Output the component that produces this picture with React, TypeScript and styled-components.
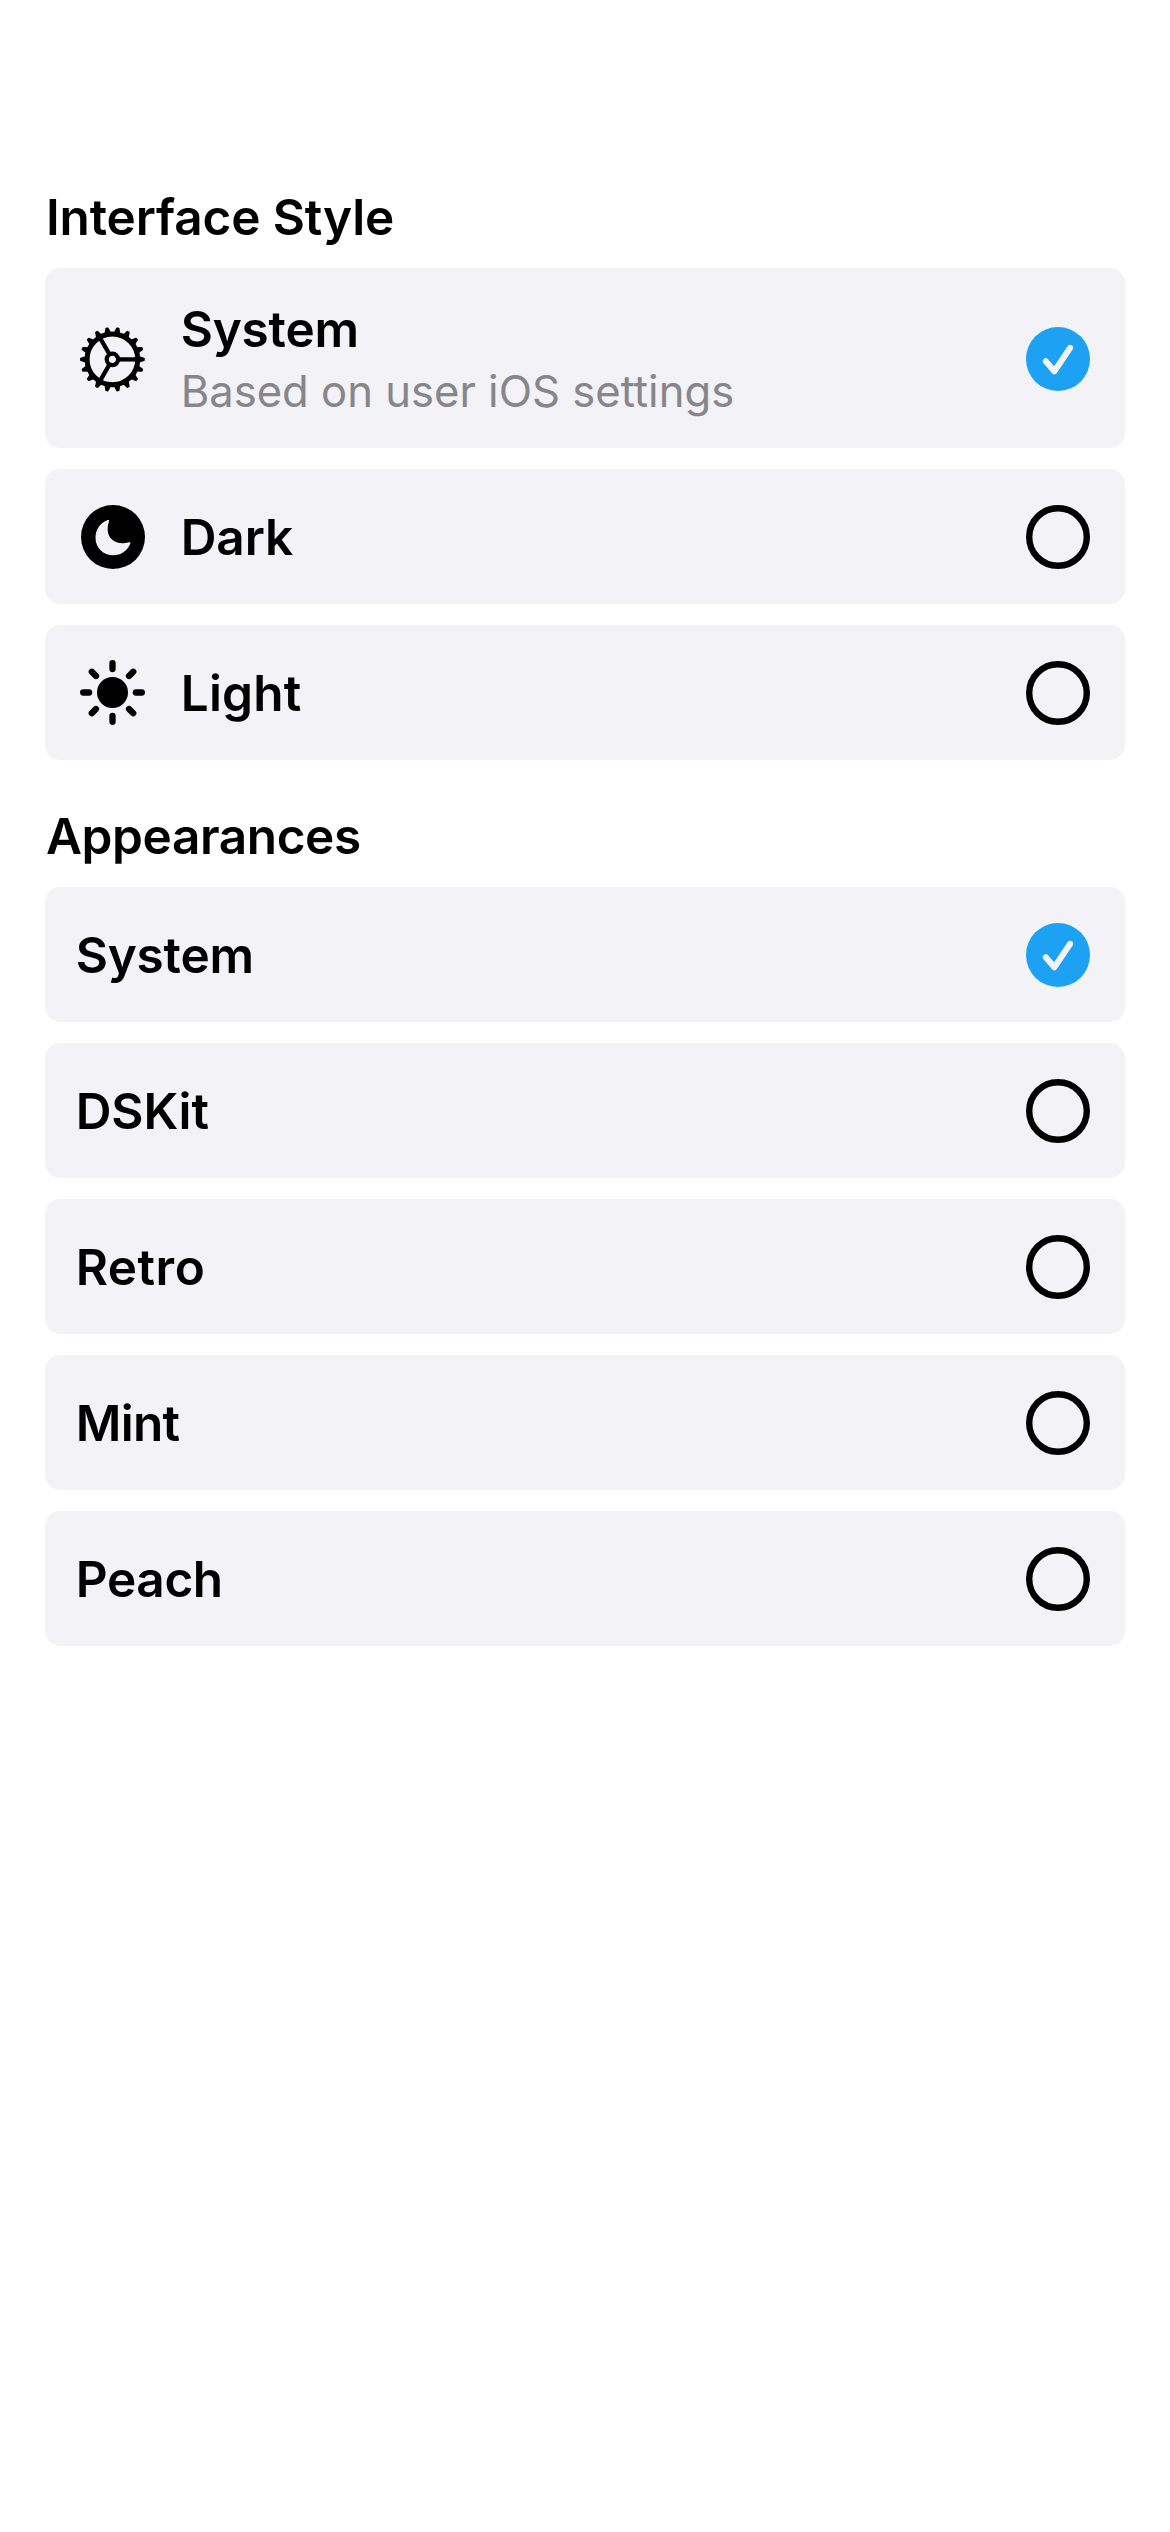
import React, { useState } from "react";
import styled, { createGlobalStyle } from "styled-components";

const GlobalStyle = createGlobalStyle`
  * {
    box-sizing: border-box;
  }

  body {
    margin: 0;
    background: #ffffff;
    color: #000000;
    font-family: Inter, "Liberation Sans", sans-serif;
  }
`;

const Screen = styled.main`
  display: flex;
  flex-direction: column;
  gap: 46px;
  min-height: 2532px;
  padding: 187px 45px 0;
  background: #ffffff;
`;

const Section = styled.section`
  display: flex;
  flex-direction: column;
  gap: 21px;
`;

const Heading = styled.h2<{ $tracking: number }>`
  margin: 0;
  padding-left: 1px;
  font-size: 49.5px;
  font-weight: 600;
  line-height: 60px;
  letter-spacing: ${(p) => p.$tracking}px;
`;

const Row = styled.div`
  display: flex;
  align-items: center;
  gap: 30px;
  padding: 30px;
  border-radius: 15px;
  background: #f2f2f7;
  cursor: pointer;
`;

const IconSlot = styled.div`
  display: flex;
  flex: none;
  align-items: center;
  justify-content: center;
  width: 75px;
  height: 75px;
`;

const Glyph = styled.svg`
  display: block;
  width: 75px;
  height: 75px;
`;

const Labels = styled.div`
  display: flex;
  flex: 1;
  flex-direction: column;
  gap: 5px;
  padding-left: 0.7px;
`;

const Title = styled.span<{ $tracking: number }>`
  font-size: 49.5px;
  font-weight: 600;
  line-height: 62px;
  letter-spacing: ${(p) => p.$tracking}px;
`;

const Subtitle = styled.span`
  color: #86868b;
  font-size: 43.6px;
  font-weight: 400;
  line-height: 53px;
`;

const TEETH = Array.from({ length: 18 }, (_, i) => i * 20);
const SPOKES = [0, 120, 240];
const RAYS = Array.from({ length: 8 }, (_, i) => i * 45);

function GearIcon() {
  return (
    <Glyph viewBox="-37.5 -37.5 75 75">
      <g transform="translate(-0.1 0.9)">
        <circle r="25.3" fill="none" stroke="#000" strokeWidth="5" />
        <circle r="5.7" fill="none" stroke="#000" strokeWidth="4.2" />
        {SPOKES.map((a) => (
          <line key={a} x1="6.5" y1="0" x2="25" y2="0" stroke="#000" strokeWidth="4.3" transform={`rotate(${a})`} />
        ))}
        {TEETH.map((a) => (
          <path
            key={a}
            d="M26 -2.6 L31.5 -0.8 V0.8 L26 2.6 Z"
            stroke="#000"
            strokeWidth="1.7"
            strokeLinejoin="round"
            transform={`rotate(${a})`}
          />
        ))}
      </g>
    </Glyph>
  );
}

function MoonIcon() {
  return (
    <Glyph viewBox="-37.5 -37.5 75 75">
      <g transform="translate(0.5 0.5)">
        <circle r="32" />
        <path
          d="M-5.3 -16.9 C-12.7 -14.3 -17.5 -7.4 -17.5 0.8 C-17.5 10.9 -9.7 18.3 0.3 18.3 C8 18.3 14.8 13.6 17.3 6.5 C17.8 5.4 17 4.9 16 5.3 C9.5 7.3 2.8 6.3 -1.2 2.3 C-5.7 -2 -6.3 -9 -4 -15.6 C-3.7 -16.7 -4.3 -17.3 -5.3 -16.9 Z"
          fill="#f2f2f7"
        />
      </g>
    </Glyph>
  );
}

function SunIcon() {
  return (
    <Glyph viewBox="-37.5 -37.5 75 75">
      <circle r="15.5" />
      {RAYS.map((a) => (
        <line
          key={a}
          x1="23.4"
          y1="0"
          x2="29.3"
          y2="0"
          stroke="#000"
          strokeWidth="6.3"
          strokeLinecap="round"
          transform={`rotate(${a})`}
        />
      ))}
    </Glyph>
  );
}

function CheckMark({ selected }: { selected: boolean }) {
  return (
    <Glyph viewBox="-37.5 -37.5 75 75">
      <g transform="translate(0.5 0.5)">
        {selected ? (
          <>
            <circle r="32" fill="#1da1f2" />
            <path
              d="M-12.2 2.2 L-3.6 12.2 L12.2 -11.2"
              fill="none"
              stroke="#f2f2f7"
              strokeWidth="6"
              strokeLinecap="round"
              strokeLinejoin="round"
            />
          </>
        ) : (
          <circle r="28.8" fill="none" stroke="#000" strokeWidth="6.4" />
        )}
      </g>
    </Glyph>
  );
}

type Option = {
  title: string;
  tracking: number;
  subtitle?: string;
  icon?: React.ReactNode;
};

const styles: Option[] = [
  { title: "System", tracking: -0.2, subtitle: "Based on user iOS settings", icon: <GearIcon /> },
  { title: "Dark", tracking: -0.1, icon: <MoonIcon /> },
  { title: "Light", tracking: 0.2, icon: <SunIcon /> },
];

const appearances: Option[] = [
  { title: "System", tracking: -0.2 },
  { title: "DSKit", tracking: -0.1 },
  { title: "Retro", tracking: 0.5 },
  { title: "Mint", tracking: -0.7 },
  { title: "Peach", tracking: -0.35 },
];

function OptionList({ heading, tracking, options }: { heading: string; tracking: number; options: Option[] }) {
  const [selected, setSelected] = useState(0);
  return (
    <Section>
      <Heading $tracking={tracking}>{heading}</Heading>
      {options.map((o, i) => (
        <Row key={o.title} role="radio" aria-checked={i === selected} onClick={() => setSelected(i)}>
          {o.icon && <IconSlot>{o.icon}</IconSlot>}
          <Labels>
            <Title $tracking={o.tracking}>{o.title}</Title>
            {o.subtitle && <Subtitle>{o.subtitle}</Subtitle>}
          </Labels>
          <IconSlot>
            <CheckMark selected={i === selected} />
          </IconSlot>
        </Row>
      ))}
    </Section>
  );
}

export default function App() {
  return (
    <>
      <GlobalStyle />
      <Screen>
        <OptionList heading="Interface Style" tracking={-0.15} options={styles} />
        <OptionList heading="Appearances" tracking={-0.4} options={appearances} />
      </Screen>
    </>
  );
}
